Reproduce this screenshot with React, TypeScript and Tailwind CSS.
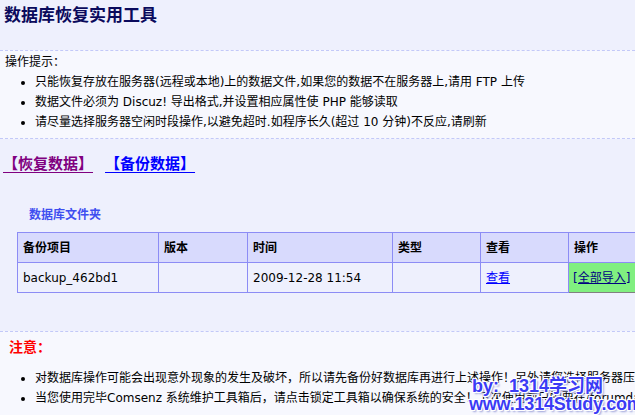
import React from "react";

const tips = [
  "只能恢复存放在服务器(远程或本地)上的数据文件,如果您的数据不在服务器上,请用 FTP 上传",
  "数据文件必须为 Discuz! 导出格式,并设置相应属性使 PHP 能够读取",
  "请尽量选择服务器空闲时段操作,以避免超时.如程序长久(超过 10 分钟)不反应,请刷新",
];

const notes = [
  "对数据库操作可能会出现意外现象的发生及破坏，所以请先备份好数据库再进行上述操作！另外请您选择服务器压力比较小的时候进行",
  "当您使用完毕Comsenz 系统维护工具箱后，请点击锁定工具箱以确保系统的安全！下次使用前只需要在/forumdata目录下删除tool.lock文件即可",
];

const headers = ["备份项目", "版本", "时间", "类型", "查看", "操作"];
const widths = ["w-[141px]", "w-[89px]", "w-[145px]", "w-[88px]", "w-[88px]", "w-[100px]"];

export default function App() {
  return (
    <div
      className="relative w-[635px] h-[415px] overflow-hidden bg-[#eef0fd] text-[12px] text-black"
      style={{ fontFamily: '"DejaVu Sans", "Noto Sans CJK SC", sans-serif' }}
    >
      {/* header */}
      <div className="h-[50px] pl-[4px] pt-[4px]">
        <h1 className="text-[17px] font-bold leading-[22px] text-[#0a0a5c]">数据库恢复实用工具</h1>
      </div>

      {/* tips */}
      <div className="border-y border-dashed border-[#c3c9f8] bg-[#f7f8fe] h-[89px] pt-[1px]">
        <p className="pl-[5px] leading-[20px]">操作提示：</p>
        <ul className="list-disc pl-[35px] leading-[20px] whitespace-nowrap">
          {tips.map((t) => (
            <li key={t}>{t}</li>
          ))}
        </ul>
      </div>

      {/* main */}
      <div className="h-[192px] pt-[14px]">
        <div
          className="flex gap-[12px] pl-[3px] text-[15px] font-bold leading-[20px]"
          style={{ fontFamily: '"Noto Sans CJK SC", sans-serif' }}
        >
          <a href="#" className="text-[#800080] underline underline-offset-[3px]">【恢复数据】</a>
          <a href="#" className="text-[#0000ff] underline underline-offset-[3px]">【备份数据】</a>
        </div>
        <p className="mt-[34px] pl-[29px] font-bold text-[#3f4ff0] leading-[16px]">数据库文件夹</p>
        <table className="ml-[17px] mt-[9px] border-collapse table-fixed w-[651px]">
          <thead>
            <tr className="h-[30px] bg-[#d8dafd]">
              {headers.map((h, i) => (
                <th
                  key={h}
                  className={`${widths[i]} border border-[#8c8cf5] text-left font-bold pl-[5px] whitespace-nowrap`}
                >
                  {h}
                </th>
              ))}
            </tr>
          </thead>
          <tbody>
            <tr className="h-[30px] bg-[#eef0fd]">
              <td className="border border-[#8c8cf5] pl-[5px]">backup_462bd1</td>
              <td className="border border-[#8c8cf5]"></td>
              <td className="border border-[#8c8cf5] pl-[5px] whitespace-nowrap">2009-12-28 11:54</td>
              <td className="border border-[#8c8cf5]"></td>
              <td className="border border-[#8c8cf5] pl-[5px]">
                <a href="#" className="text-[#0000ff] underline">查看</a>
              </td>
              <td className="border border-[#808080] bg-[#80ef80] pl-[4px] whitespace-nowrap">
                <a href="#" className="text-[#000080] underline">[全部导入]</a>
              </td>
            </tr>
          </tbody>
        </table>
      </div>

      {/* notes */}
      <div className="border-t border-dashed border-[#c3c9f8] bg-[#f7f8fe] h-[84px] pt-[6px]">
        <p className="pl-[9px] text-[14px] font-bold text-[#ff0000] leading-[18px]">注意：</p>
        <ul className="list-disc pl-[35px] mt-[12px] leading-[20px] whitespace-nowrap">
          {notes.map((n) => (
            <li key={n}>{n}</li>
          ))}
        </ul>
      </div>

      {/* watermark */}
      <div
        className="absolute left-[469px] top-[377px] font-bold text-[#3b3bf5] leading-none"
        style={{
          fontFamily: '"Liberation Sans", "Noto Sans CJK SC", sans-serif',
          textShadow: "1px 1px 0 #fff, -1px -1px 0 #fff, 1px -1px 0 #fff, -1px 1px 0 #fff, 2px 2px 2px #9aa0d8",
        }}
      >
        <div className="text-[18px] pl-[3px]">by:&nbsp;&nbsp;1314学习网</div>
        <div className="text-[18px] mt-[0px] tracking-[-0.2px]">www.1314Study.com</div>
      </div>
    </div>
  );
}
